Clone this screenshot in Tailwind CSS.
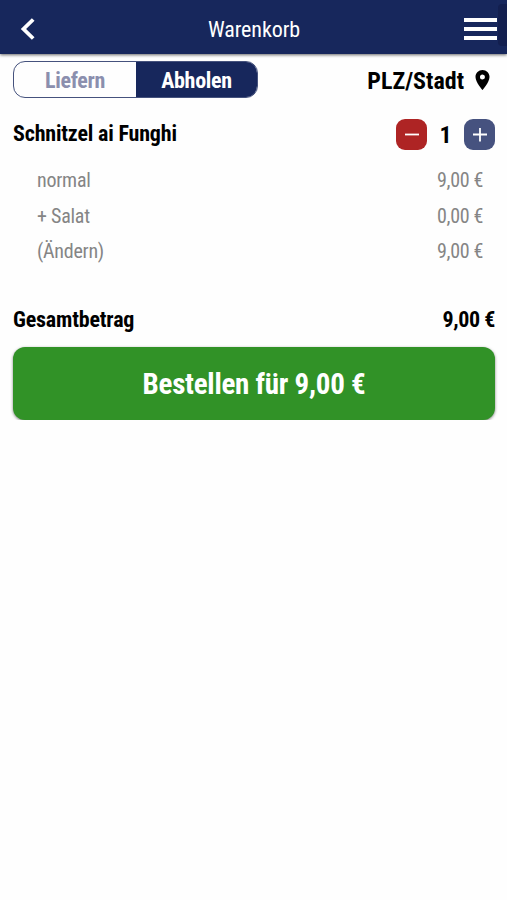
<!DOCTYPE html>
<html lang="de">
<head>
    <meta charset="UTF-8">
    <meta name="viewport" content="width=device-width, initial-scale=1.0">
    <title>Warenkorb</title>
    <script src="https://cdn.jsdelivr.net/npm/@tailwindcss/browser@4"></script>
</head>
<body class="bg-[#fefefe] font-['Roboto_Condensed','Roboto',sans-serif] font-stretch-condensed text-black">
    <header class="relative flex h-[54px] items-center justify-between bg-[#17275c] pl-5 pr-[10px] pt-[3px] shadow-[0_1px_3px_rgba(0,0,0,0.6)]">
        <a href="#" class="w-6">
            <svg class="h-[22px] w-[15px]" viewBox="0 0 15 22" fill="none" stroke="white" stroke-width="3.8"><path d="M13.2 1.5 L3.5 11 L13.2 20.5"/></svg>
        </a>
        <h1 class="pt-0.5 text-[22px] leading-[26px] tracking-[-0.1px] text-white">Warenkorb</h1>
        <button class="flex w-[33px] flex-col gap-[5px]">
            <span class="h-1 w-full bg-white"></span>
            <span class="h-1 w-full bg-white"></span>
            <span class="h-1 w-full bg-white"></span>
        </button>
        <div class="absolute right-0 top-1 h-[42px] w-[9px] rounded-l bg-[#131f4f]"></div>
    </header>

    <main class="pl-[13px] pr-3 pt-[7px]">
        <div class="flex items-center justify-between">
            <div class="flex h-[37px] w-[245px] overflow-hidden rounded-xl border border-[#17275c]/80 bg-clip-padding text-[22px] font-bold tracking-[-0.3px]">
                <button class="w-[122px] pt-0.5 text-[#8b8fae]">Liefern</button>
                <button class="flex-1 bg-[#17275c] pt-0.5 text-white">Abholen</button>
            </div>
            <div class="flex items-center gap-[11px] pr-[5px]">
                <span class="pt-0.5 text-2xl font-bold">PLZ/Stadt</span>
                <svg class="h-5 w-[15px]" viewBox="5 2 14 20"><path d="M12 2C8.13 2 5 5.13 5 9c0 5.25 7 13 7 13s7-7.75 7-13c0-3.87-3.13-7-7-7zm0 9.5a2.5 2.5 0 1 1 0-5 2.5 2.5 0 0 1 0 5z"/></svg>
            </div>
        </div>

        <div class="mt-[21px] flex h-[31px] items-center justify-between">
            <h2 class="pb-0.5 text-[22px] font-bold tracking-[-0.18px]">Schnitzel ai Funghi</h2>
            <div class="flex items-center">
                <button class="flex size-[31px] items-center justify-center rounded-[9px] bg-[#ae2424]">
                    <svg class="size-[14px]" viewBox="0 0 14 14" stroke="white" stroke-width="1.8"><path d="M0 6.5h14"/></svg>
                </button>
                <span class="w-[37px] text-center text-2xl font-bold">1</span>
                <button class="flex size-[31px] items-center justify-center rounded-[9px] bg-[#46527f]">
                    <svg class="size-[14px]" viewBox="0 0 14 14" stroke="white" stroke-width="1.8"><path d="M0 6.5h14M7 0v13.5"/></svg>
                </button>
            </div>
        </div>

        <ul class="mt-[13px] pl-6 pr-3 text-xl leading-[35.5px] tracking-[-0.25px] text-[#858585]">
            <li class="flex justify-between"><span>normal</span><span class="tracking-[-0.35px]">9,00 €</span></li>
            <li class="flex justify-between"><span>+ Salat</span><span class="tracking-[-0.35px]">0,00 €</span></li>
            <li class="flex justify-between"><a href="#">(Ändern)</a><span class="tracking-[-0.35px]">9,00 €</span></li>
        </ul>

        <div class="mt-[33px] flex justify-between text-[22px] font-bold leading-[33px] tracking-[-0.18px]">
            <span>Gesamtbetrag</span>
            <span class="tracking-[-0.4px]">9,00 €</span>
        </div>
        <button class="mt-[11px] h-[73px] w-full rounded-xl bg-[#319227] pt-1 text-[29px] font-bold tracking-[-0.25px] text-white shadow-[0_1px_3px_rgba(0,0,0,0.5)]">Bestellen für 9,00 €</button>
    </main>
</body>
</html>
